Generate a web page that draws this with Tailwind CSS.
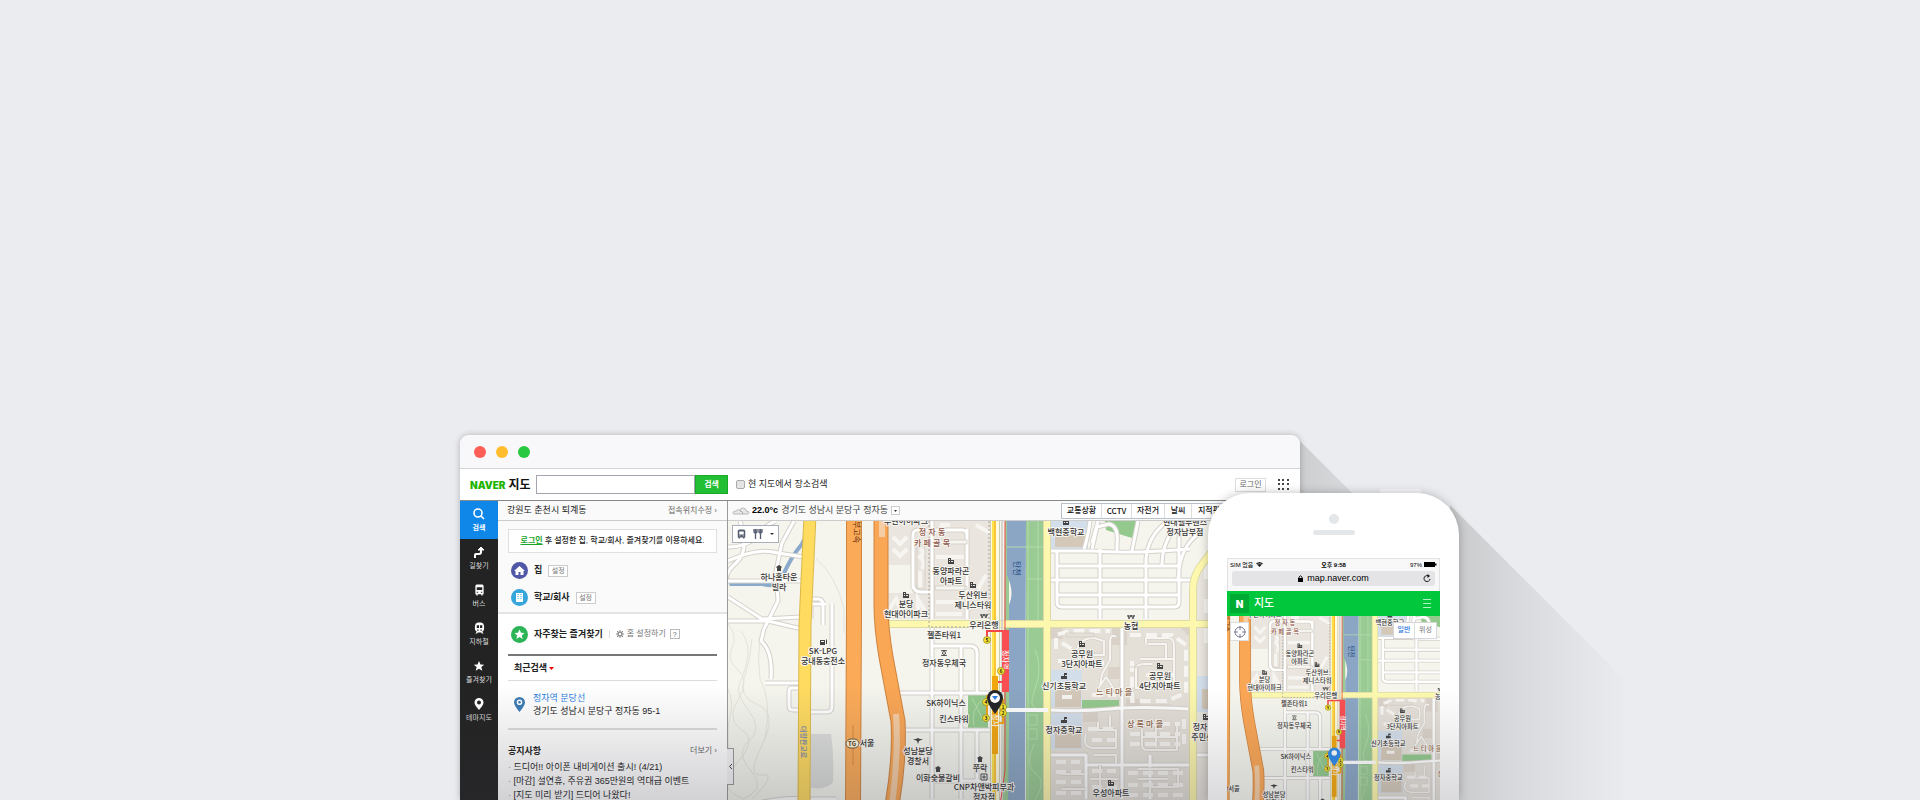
<!DOCTYPE html>
<html lang="ko">
<head>
<meta charset="utf-8">
<title>NAVER 지도</title>
<script src="https://cdn.jsdelivr.net/npm/@tailwindcss/browser@4"></script>
</head>
<body class="bg-[#ebecf0] font-['Liberation_Sans','Noto_Sans_CJK_KR',sans-serif] text-[#222]">

<!-- Shared map artwork -->
<svg width="0" height="0" class="absolute" aria-hidden="true">
  <defs>
    <g id="streets" fill="none" stroke-linejoin="round">
      <path d="M728 548q20 0 30-12t18-14M728 562q30-14 50-8l26 4M740 522q10 30-4 42t-8 24M794 522l-12 22-6 28 2 30-14 28-3 12q12 10 10 38M728 582h74M728 598l34 22 40-2M728 622l40 0 34 8M765 684h34M799 689h-8q-2 0-2 4v14q0 4 4 4h6M812 600h6q5 0 5 6v20M832 605v102q0 6-5 6h-16M811 600v20M812 605h14M760 804q20-6 50-4h26"/>
      <path d="M887 694h108M904 731h86M932 628v172M961 647v84M977 731v69M961 731v69M932 647h38q7 0 7 7v40M932 782h60M932 522v98M967 530q0 0 0 90M913 590v-54q0-5 5-5h44q5 0 5 5v58M913 585q0 8 8 8h11"/>
      <path d="M1050 552h42q40 3 98-2M1057 553v50q0 5 5 5h112q5 0 5-5v-76M1057 567h122M1046 581h146M1057 596h122M1100 550v70M1092 550l5-22 12-3q10 2 8 20v7M1098 522l-6 22M1132 552l6-30M1146 620v-60q2-24 22-38M1162 566q0-24 18-44M1178 580q2-34 22-46M1090 522q-2 16-6 28"/>
      <path d="M1122 628v172M1050 711q30 2 60-1t78 0M1050 756h36v10h104M1086 766v34M1000 711h48M1150 756v44M1190 756h30"/>
    </g>
    <g id="lanes" fill="none" stroke-linejoin="round">
      <path d="M1076 655q2-16 18-16l10 3v14h-18v8M1110 641v20l-8 14-2 12M1116 638q-6-4-6 6M1098 690l8-12 8 12M1146 645v-6h22q6 0 6 8v42h-38v-18q0-6 8-6h8M1140 660h34M1148 645h18v14"/>
      <path d="M1086 735q-4 14 8 14h22v-18h-18v-8M1110 731v-14M1142 728v18q0 5 5 5h30v-28M1156 720v28M1142 738h35M1094 756h22v8M1138 770h40v18h-28v10M1138 780h30M1090 780h28M1100 766v30M1062 775h22M1062 790h24"/>
    </g>
    <g id="map-art">
      <rect x="728" y="522" width="580" height="284" fill="#f5f5ee"/>
      <g fill="none" stroke="#e4e3d9" stroke-width="1">
        <path d="M728 625q10 12 4 24t6 22 0 30 4 30-6 34 8 35M741 632q10 14 6 30t-8 24 10 26 0 30 2 30-8 28M752 640q-2 22-8 40t14 26 4 40 0 30-10 24M728 690q6 14 2 28t0 40M816 560q20 16 28 50v24M760 640q-3 20 0 40 12 20 5 60"/>
      </g>
      <path d="M728 585h34q14 4 20-6 8-20 20-34l12-24" fill="none" stroke="#8aa9cb" stroke-width="4"/>
      <path d="M811 735h20q3 20 2 48-6 8-22 6z" fill="#dcdddb"/>
      <path d="M888 522h105v98H888z" fill="#eae6df"/>
      <path d="M889 566h24v28h-24z" fill="#f5f5ee"/>
      <path d="M968 695h20v34h-20z" fill="#93c98d"/>
      <path d="M972 699l12 24M984 699q-14 12-10 28" stroke="#b5dab0" fill="none"/>
      <path d="M1050 628h140v178h-140z" fill="#e4dfd7"/>
      <path d="M1196 580l16-30h96v256h-112z" fill="#e9e5de"/>
      <path d="M1050 522h38v28h-38zM1051 671h31v37h-31zM1051 714h31v36h-31zM1197 677h30v36h-30z" fill="#d3deeb"/>
      <path d="M1055 536h31v12h-31zM1055 688h26v20h-26zM1055 731h26v18h-26zM1202 690h16v20h-16z" fill="#d4c9b9"/>
      <path d="M1105 522h33l-6 17-26-8zM1082 701h37v9h-37z" fill="#93c98d"/>
      <g fill="#dad2c9"><path d="M1112 628h15v18h-15zM1083 712h15v11h-15zM1126 700h14v10h-14zM1108 668h13v12h-13zM1051 628h12v12h-12zM1180 628h10v10z"/></g>
      <use href="#streets" stroke="#d5d1ca" stroke-width="5"/>
      <use href="#streets" stroke="#fff" stroke-width="3"/>
      <use href="#lanes" stroke="#cdc8c0" stroke-width="3"/>
      <use href="#lanes" stroke="#f7f5f1" stroke-width="2"/>
      <g fill="none" stroke="#f7f5f1" stroke-width="4">
        <path d="M893 538l7 7 7-7M893 550l7 7 7-7" />
        <path d="M936 543h30M936 558h28M936 570h28M936 589h28M936 603h28M936 615h26"/>
        <path stroke-dasharray="11 5" d="M1056 650v-14l14-4h40M1058 662h14M1062 644l10 6M1086 664h18M1130 636h42l14 10v48l-20 8h-34v-40M1146 676h30M1146 684h24M1092 696h24M1062 698h10"/>
        <path stroke-dasharray="10 5" d="M1088 730h28M1092 741h24M1130 725h50M1130 735h50M1130 745h50M1056 763h24M1056 773h30M1056 783h30M1056 794h30M1092 772h24M1092 788h26M1128 774h56M1128 786h56M1128 796h56M1184 720v30"/>
        <path d="M920 550q6 3 0 8 6 4 2 12M920 572v16M888 612l8-12 6 14M918 612v-12l8 14M978 590l8-14M976 526l14 8M940 526h10"/>
        <path d="M1206 560v20M1206 600v14M1206 628v16"/>
      </g>
      <g fill="none" stroke="#d6d1c8" stroke-width="1"><path d="M917 546h8v44h-8zM935 541h32v4h-32zM935 568h32v4h-32zM935 587h32v4h-32zM1066 634h28v4h-28zM1130 668h8v20M1136 706h36"/></g>
      <path d="M1026 522h18v284h-18z" fill="#9acb94"/>
      <path d="M1005 522h4v284h-6z" fill="#9acb94"/>
      <path d="M1007 522h19l-1 284h-17l1-80 0-120q6-12-2-30z" fill="#8ba6c4"/>
      <path d="M1007 548h37M1028 522v284M1038 522v100M1028 580h14M1035 650q8 20 0 40t4 20M1028 716h9v10h-9zM1028 730h9v10h-9zM1034 745q-10 22 2 30t-4 30" fill="none" stroke="#b3dbad" stroke-width="1"/>
      <g fill="none">
        <path d="M888 625h420M1047 522v284M1193 806V590q0-14 10-26l20-26" stroke="#dddba6" stroke-width="8"/>
        <path d="M888 625h420M1047 522v284M1193 806V590q0-14 10-26l20-26" stroke="#fdf8ae" stroke-width="6"/>
        <path d="M1000 711h48" stroke="#fff" stroke-width="4"/>
        <path d="M929 522v106h58M989 522v106" stroke="#aaa49c" stroke-dasharray="2 2"/>
        <path d="M995 522v284" stroke="#cfcdb0" stroke-width="10"/>
        <path d="M995 522v284" stroke="#fffbe0" stroke-width="8"/>
        <path d="M994 522v284" stroke="#ffe24d" stroke-width="4"/>
        <path d="M995 522v284" stroke="#f6a821" stroke-width="1"/>
        <path d="M1002 522v284" stroke="#d8d5cd" stroke-width="2"/>
        <path d="M810 516l-5 110-1 180" stroke="#d9b94c" stroke-width="13"/>
        <path d="M810 516l-5 110-1 180" stroke="#ffdb60" stroke-width="11"/>
        <path d="M854 516v100l-1 190" stroke="#cf8540" stroke-width="16"/>
        <path d="M854 516v100l-1 190" stroke="#fbab58" stroke-width="14"/>
        <path d="M881 516v90q0 22 5 52l12 64q2 38-6 84" stroke="#cf8540" stroke-width="15"/>
        <path d="M881 516v90q0 22 5 52l12 64q2 38-6 84" stroke="#f9a655" stroke-width="13"/>
        <path d="M896 715q3 36-4 91M882 522v16" stroke="#f4cda4" stroke-width="6"/>
        <path d="M853 726v40" stroke="#d98a3e"/>
        <path d="M1005 522v250l-5 34" stroke="#f4474b" stroke-width="1"/>
        <path d="M987 640v-8h18M998 683h6" stroke="#f4474b" stroke-width="2"/>
        <path d="M987 696v20M1003 700v24h-8" stroke="#efa519" stroke-width="2"/>
      </g>
      <path d="M1002 631h7v62h-7z" fill="#fa4f52"/>
      <path d="M992 677h6v78h-6z" fill="#f3a70f"/>
      <rect x="846" y="740" width="13" height="9" rx="5" fill="#fff3d6" stroke="#6b5a3d"/>
    </g>
    <g id="i-building" fill="#444"><path d="M-3-3h3v2h3v4h-6zM-2-2v1h1v-1zM-2 0v1h1V0zM0 0v1h1V0zM1 0v1h1V0z" fill-rule="evenodd"/></g>
    <g id="i-school" fill="#444"><path d="M-3 0h3v-3h3v2H1v1h2v3h-6z"/></g>
    <g id="i-hut" fill="#444"><path d="M-3-1L0-3l3 2-1 1v3h-4V0z"/></g>
    <g id="i-bank" fill="none" stroke="#444"><path d="M-3-2l1 4 2-4 2 4 1-4M-4-1h8" stroke-width=".9"/></g>
    <g id="i-post" fill="none" stroke="#444" stroke-width=".9"><circle r="1.500"/><path d="M-3-2l1-.5h4l1 .5M-3 2l1 .5h4l1-.5"/></g>
    <g id="i-police" fill="#444"><path d="M-5-2h3l2-1 2 1h3L1 0 0 3-1 0z"/></g>
    <g id="i-gas" fill="#444"><path d="M-3-2h5v5h-5zM3-3l1 1v4H3zM-2-1v1h3v-1z" fill-rule="evenodd"/></g>
    <g id="i-clinic"><path d="M-3-3h6v6h-6z" fill="#fff" stroke="#444"/><path d="M-2 0h4M0-2v4" stroke="#444"/></g>
    <linearGradient id="fadeA" gradientUnits="userSpaceOnUse" x1="840" y1="0" x2="980" y2="0"><stop offset="0" stop-color="#cdced0"/><stop offset="1" stop-color="#cdced0" stop-opacity="0"/></linearGradient>
    <linearGradient id="fadeB" gradientUnits="userSpaceOnUse" x1="1000" y1="0" x2="1170" y2="0"><stop offset="0" stop-color="#cbccce"/><stop offset=".35" stop-color="#d9dadd"/><stop offset="1" stop-color="#ebecf0"/></linearGradient>
  </defs>
</svg>

<main class="relative h-screen min-h-[800px] overflow-hidden pt-[435px]">
  <div class="relative mx-auto w-[1000px]">

    <svg class="absolute left-0 top-0 overflow-visible" width="1000" height="365" viewBox="0 0 1000 365" aria-hidden="true">
      <path d="M837 3l363 362H837z" fill="url(#fadeA)"/>
      <path d="M990 70l295 295H990z" fill="url(#fadeB)"/>
    </svg>

    <!-- Desktop browser -->
    <section class="relative w-[840px] h-[365px] flex flex-col overflow-hidden rounded-t-[9px] bg-white shadow-[0_0_6px_rgba(0,0,0,0.25)]">
      <div class="flex h-[34px] shrink-0 items-center gap-[10px] border-b border-[#d3d4d6] bg-[#f8f8fa] px-[14px]">
        <span class="size-3 rounded-full bg-[#ff5f57]"></span><span class="size-3 rounded-full bg-[#ffbd2e]"></span><span class="size-3 rounded-full bg-[#28c940]"></span>
      </div>
      <header class="flex h-8 shrink-0 items-center border-b border-[#888] bg-white pl-[10px] pr-[11px]">
        <a href="#" class="flex w-[66px] items-center gap-[3px] whitespace-nowrap leading-none">
          <span class="font-['Inter','Open_Sans',sans-serif] text-[10px] font-black text-[#1eb400]">NAVER</span>
          <span class="text-[12px] font-bold text-[#111]">지도</span>
        </a>
        <form class="flex h-[19px]" onsubmit="return false">
          <input aria-label="장소 검색" class="w-[159px] border border-[#a5a5af] bg-white px-1 text-[9px]">
          <button class="w-[33px] border border-[#18a82a] bg-[#22be33] text-[8px] font-bold text-white">검색</button>
        </form>
        <label class="ml-2 flex items-center gap-[3px] text-[9px] leading-none"><input type="checkbox" class="size-[9px] appearance-none rounded-[2px] border border-[#aaa] bg-[#e4e4e4]">현 지도에서 장소검색</label>
        <button class="ml-auto h-[14px] w-[31px] border border-[#ddd] text-[8px] leading-none text-[#666]">로그인</button>
        <button aria-label="전체 서비스" class="ml-3"><svg width="11" height="11" viewBox="0 0 11 11" fill="#444"><path d="M0 0h2v2H0zM4 0h2v2H4zM9 0h2v2H9zM0 4h2v2H0zM4 4h2v2H4zM9 4h2v2H9zM0 9h2v2H0zM4 9h2v2H4zM9 9h2v2H9z"/></svg></button>
      </header>

      <div class="flex min-h-0 flex-1">
        <nav class="flex w-[38px] shrink-0 flex-col bg-[#232323] text-[7px] leading-[9px] text-[#ddd]">
          <a href="#" class="flex h-[38px] flex-col items-center justify-center gap-[3px] bg-[#0f87e8] font-bold text-white"><svg width="12" height="12" viewBox="0 0 12 12" fill="none" stroke="#fff" stroke-width="1.6"><circle cx="5" cy="5" r="4"/><path d="M8 8l3 3"/></svg>검색</a>
          <a href="#" class="flex h-[38px] flex-col items-center justify-center gap-[3px]"><svg width="12" height="12" viewBox="0 0 12 12" fill="none" stroke="#fff" stroke-width="2"><path d="M2 12V9q0-1 1-1h3q2 0 2-2V3"/><path d="M5 4l3-3 3 3z" fill="#fff" stroke-width="1"/></svg>길찾기</a>
          <a href="#" class="flex h-[38px] flex-col items-center justify-center gap-[3px]"><svg width="11" height="12" viewBox="0 0 12 12"><path fill="#fff" fill-rule="evenodd" d="M3 0h6q1.500 0 1.500 2v8.500H9.500V12H8v-1.500H4V12H2.500v-1.500h-1V2Q1.500 0 3 0zM3 3v3h6V3zM3 8v1h1.500V8zM7.500 8v1H9V8z"/></svg>버스</a>
          <a href="#" class="flex h-[38px] flex-col items-center justify-center gap-[3px]"><svg width="11" height="12" viewBox="0 0 12 12"><path fill="#fff" fill-rule="evenodd" d="M4 0h4q3 1 3 4v3q0 2-2 3l1.500 2H8.500L8 11H4l-.5 1h-2L3 10Q1 9 1 7V4q0-3 3-4zM3 3v3h2.500V3zM6.500 3v3H9V3zM3.500 7.500V9H5V7.500zM7 7.500V9h1.500V7.500z"/></svg>지하철</a>
          <a href="#" class="flex h-[38px] flex-col items-center justify-center gap-[3px]"><svg width="12" height="12" viewBox="0 0 12 12"><path fill="#fff" d="M6 1l1.500 3.500 3.700.2-2.900 2.400 1 3.700L6 8.800l-3.300 2 1-3.700L.8 4.700l3.700-.2z"/></svg>즐겨찾기</a>
          <a href="#" class="flex h-[38px] flex-col items-center justify-center gap-[3px]"><svg width="12" height="12" viewBox="0 0 12 12"><path fill="#fff" fill-rule="evenodd" d="M6 0a4.500 4.500 0 0 1 4.500 4.500Q10.500 7 6 12 1.500 7 1.500 4.500A4.500 4.500 0 0 1 6 0zm0 2.500a2 2 0 1 0 0 4 2 2 0 0 0 0-4z"/></svg>테마지도</a>
        </nav>

        <div class="w-[230px] shrink-0 border-r border-[#999] bg-[#fafafa]">
          <div class="flex h-5 items-center justify-between border-b border-[#ccc] pl-[9px] pr-[10px] text-[9px] leading-none"><span>강원도 춘천시 퇴계동</span><a href="#" class="text-[8px] text-[#666]">접속위치수정 ›</a></div>
          <div class="h-[93px] border-b-2 border-[#e4e4e4] px-[10px] pt-2">
            <p class="flex h-6 items-center justify-center gap-[2px] whitespace-nowrap border border-[#e0e0e0] bg-white text-[8px] font-medium leading-none"><a href="#" class="font-bold text-[#1ba62b] underline">로그인</a> 후 설정한 집, 학교/회사, 즐겨찾기를 이용하세요.</p>
            <div class="mt-[9px] flex flex-col gap-[10px] pl-[3px] text-[9px] font-bold leading-none">
              <div class="flex h-[17px] items-center gap-[6px]"><svg width="17" height="17" viewBox="0 0 17 17"><circle cx="8.500" cy="8.500" r="8.500" fill="#4f57a6"/><path d="M3 9l5.500-5L14 9h-1.500v4h-3v-3h-2v3h-3V9z" fill="#fff"/></svg>집<button class="h-3 w-5 border border-[#ccc] bg-white text-[7px] font-normal leading-none text-[#777]">설정</button></div>
              <div class="flex h-[17px] items-center gap-[6px]"><svg width="17" height="17" viewBox="0 0 17 17"><circle cx="8.500" cy="8.500" r="8.500" fill="#36a5dc"/><path d="M5 4h7v9H5z" fill="#fff"/><path d="M7 5v6M10 5v6" stroke="#36a5dc" stroke-dasharray="1 1"/></svg>학교/회사<button class="h-3 w-5 border border-[#ccc] bg-white text-[7px] font-normal leading-none text-[#777]">설정</button></div>
            </div>
          </div>
          <div class="bg-white px-[10px]">
            <div class="flex h-[42px] items-center gap-[6px] whitespace-nowrap border-b-2 border-[#777] pl-[3px] text-[9px] font-bold leading-none"><svg width="17" height="17" viewBox="0 0 17 17"><circle cx="8.500" cy="8.500" r="8.500" fill="#2db457"/><path fill="#fff" d="M8.500 3.500l1.500 3.300 3.500.3-2.700 2.400.9 3.500-3.200-1.900L5.300 13l.9-3.500-2.700-2.400 3.500-.3z"/></svg>자주찾는 즐겨찾기
              <button class="flex items-center gap-[3px] border-l border-[#ddd] pl-[6px] text-[8px] font-normal leading-none text-[#777]"><svg width="8" height="8" viewBox="0 0 8 8" fill="none" stroke="#888"><circle cx="4" cy="4" r="2" stroke-width="1.500"/><path d="M4 0v1M4 7v1M0 4h1M7 4h1M1 1l1 1M6 6l1 1M7 1L6 2M2 6L1 7"/></svg>홈 설정하기</button>
              <button class="-ml-[2px] size-[10px] border border-[#bbb] text-[7px] font-normal leading-none text-[#666]">?</button></div>
            <h2 class="flex h-[25px] items-center gap-[2px] border-b border-[#ddd] pl-[6px] text-[9px] font-bold leading-none">최근검색<svg width="5" height="3" viewBox="0 0 5 3"><path d="M0 0h5L2.500 3z" fill="#e00"/></svg></h2>
            <div class="flex h-[49px] items-center gap-2 border-b-2 border-[#ddd] pl-[6px] text-[9px] leading-[13px]"><svg width="11" height="15" viewBox="0 0 11 15"><path fill="#3d7cb5" fill-rule="evenodd" d="M5.500 0A5.500 5.500 0 0 1 11 5.500Q11 8.500 5.500 15 0 8.500 0 5.500A5.500 5.500 0 0 1 5.500 0zm0 2.500a2.800 2.800 0 1 0 0 5.600 2.800 2.800 0 0 0 0-5.600z"/><circle cx="5.500" cy="5.300" r="1.300" fill="#3d7cb5"/></svg><div><a href="#" class="block text-[#1f80dd]">정자역 분당선</a><p>경기도 성남시 분당구 정자동 95-1</p></div></div>
            <div class="flex items-center justify-between pt-[15px] pb-[3px] leading-[12px]"><h2 class="text-[9px] font-bold">공지사항</h2><a href="#" class="text-[8px] text-[#666]">더보기 ›</a></div>
            <ul class="whitespace-nowrap text-[9px] leading-[14px]">
              <li><span class="text-[#999]">·</span> <a href="#">드디어!! 아이폰 내비게이션 출시! (4/21)</a></li>
              <li><span class="text-[#999]">·</span> <a href="#">[마감] 설연휴, 주유권 365만원의 역대급 이벤트</a></li>
              <li><span class="text-[#999]">·</span> <a href="#">[지도 미리 받기] 드디어 나왔다!</a></li>
            </ul>
          </div>
        </div>

        <div class="flex min-w-0 flex-1 flex-col">
          <div class="flex h-5 shrink-0 items-center border-b border-[#ccc] bg-[#fafafa] pl-1 text-[9px] leading-none whitespace-nowrap">
            <svg width="18" height="9" viewBox="0 0 18 9" fill="#e8e8e8" stroke="#aaa" stroke-width=".8"><path d="M1 7q0-2 3-2 2-3 5 0 2 0 2 3H2q-1 0-1-1z"/><path d="M8 5q0-3 3-3t3 3q3 0 3 1.500T15 8h-4q0-3-3-3z"/></svg>
            <strong class="ml-[2px] font-bold text-black">22.0°c</strong><span class="ml-[3px] text-[#444]">경기도 성남시 분당구 정자동</span>
            <button aria-label="지역 선택" class="ml-[3px] flex size-[9px] items-center justify-center border border-[#ccc] bg-white"><svg width="3" height="2" viewBox="0 0 3 2"><path d="M0 0h3L1.500 2z" fill="#333"/></svg></button>
            <div class="ml-auto mr-[47px] flex h-4 divide-x divide-[#ddd] border border-[#b9c0cb] bg-white text-[8px] font-medium text-[#111]">
              <button class="w-10">교통상황</button><button class="w-[30px] font-['Noto_Sans_CJK_KR',sans-serif]">CCTV</button><button class="w-[33px]">자전거</button><button class="w-[27px]">날씨</button><button class="w-[60px] pl-[6px] text-left">지적편집도</button>
            </div>
          </div>
          <div class="relative min-h-0 flex-1">
            <svg class="block h-full w-full" viewBox="728 522 572 279" preserveAspectRatio="xMinYMin slice" role="img" aria-label="정자역 주변 지도">
              <use href="#map-art"/><g data-labels></g>
              <path d="M995 715q-8-11-8-16a8 8 0 0 1 16 0q0 5-8 16z" fill="#232427"/><circle cx="995" cy="699" r="5" fill="#fff"/><path d="M992 697h6l-3 4z" fill="#2b7de0"/>
            </svg>
            <div class="absolute left-1 top-1 flex h-[18px] w-[47px] items-center justify-around border border-[#a9afba] bg-white">
              <button aria-label="버스"><svg width="9" height="10" viewBox="0 0 12 12"><path fill="#555e70" fill-rule="evenodd" d="M3 0h6q2 0 2 2v8.500H10V12H8v-1.500H4V12H2v-1.500H1V2q0-2 2-2zM3 2.500v4h6v-4zM3 8v1h1.500V8zM7.500 8v1H9V8z"/></svg></button>
              <button aria-label="음식점"><svg width="10" height="10" viewBox="0 0 10 10" stroke="#555e70" fill="none"><path d="M2.500 4v6M1 0v3q1.500 2 3 0V0M2.500 0v4" stroke-width="1.300"/><path d="M7.500 4v6M6 0v3q1.500 2 3 0V0M7.500 0v4" stroke-width="1.300"/></svg></button>
              <button aria-label="더보기"><svg width="4" height="2" viewBox="0 0 4 2"><path d="M0 0h4L2 2z" fill="#333"/></svg></button>
            </div>
            <button aria-label="패널 접기" class="absolute -left-px top-[227px] flex h-[37px] w-[7px] items-center justify-center border border-l-0 border-[#999] bg-[#f5f5f7]"><svg width="3" height="5" viewBox="0 0 3 5" fill="none" stroke="#444"><path d="M3 0L.5 2.500 3 5"/></svg></button>
          </div>
        </div>
      </div>
      <div class="pointer-events-none absolute inset-x-0 bottom-0 h-[115px] bg-linear-to-b from-[#33333f]/0 to-[#33333f]/22"></div>
    </section>

    <!-- Phone -->
    <section class="absolute left-[748px] top-[58px] w-[251px]">
      <div class="absolute -top-1 left-[172px] h-2 w-[41px] rounded-t-[2px] bg-[#f8f8fa]"></div>
      <div class="relative flex h-[307px] flex-col rounded-t-[42px] bg-white px-[19px] shadow-[0_0_10px_rgba(0,0,0,0.25)]">
        <div class="flex h-[65px] shrink-0 flex-col items-center gap-[6px] pt-[21px]"><span class="size-[10px] rounded-full bg-[#e4e7e9]"></span><span class="h-[5px] w-[42px] rounded-full bg-[#e4e7e9]"></span></div>
        <div class="flex h-[33px] shrink-0 flex-col border border-b-0 border-[#e2e2e4] bg-[#f8f8f9] px-1">
          <div class="-mx-[2px] grid h-[11px] grid-cols-3 items-center text-[6px] leading-none text-black">
            <span class="flex items-center gap-[3px]"><span>SIM 없음</span><svg width="7" height="5" viewBox="0 0 7 5"><path d="M3.500 5L0 1.500Q3.500-1.500 7 1.500z" fill="#222"/><path d="M1 2.500q2.500-2 5 0" stroke="#f8f8f9" stroke-width=".5" fill="none"/></svg></span>
            <span class="text-center font-bold">오후 9:58</span>
            <span class="flex items-center justify-end gap-[2px]">97%<svg width="13" height="5" viewBox="0 0 13 5"><path d="M0 0h11v1.500h1.500v2H11V5H0z"/></svg></span>
          </div>
          <div class="mt-px flex h-[15px] items-center rounded-[3px] bg-[#e4e4e6] px-1 text-black">
            <span class="flex flex-1 items-center justify-center gap-1 pl-2 text-[9px] leading-none"><svg width="5" height="7" viewBox="0 0 5 7"><path d="M0 3h5v4H0z"/><path d="M1 3V2q1.500-2.500 3 0v1" fill="none" stroke="#000" stroke-width=".9"/></svg>map.naver.com</span>
            <button aria-label="새로고침"><svg width="8" height="9" viewBox="0 0 8 9" fill="none" stroke="#111"><path d="M6 2.300A3 3 0 1 0 7 5"/><path d="M4.500 0L7 2 4.500 4z" fill="#111" stroke="none"/></svg></button>
          </div>
        </div>
        <div class="flex h-[25px] shrink-0 items-center bg-[#00c73c] pl-[3px] pr-[9px] text-white">
          <span class="flex size-[19px] items-center justify-center bg-[#00ab33] font-['Inter','Open_Sans',sans-serif] text-[10px] font-black leading-none">N</span>
          <span class="ml-[5px] text-[11px] font-medium leading-none">지도</span>
          <button aria-label="메뉴" class="ml-auto"><svg width="8" height="9" viewBox="0 0 8 9" stroke="#b4efc5"><path d="M0 .5h8M0 4.500h8M0 8.500h8"/></svg></button>
        </div>
        <div class="relative min-h-0 flex-1 overflow-hidden">
          <svg class="block h-full w-full" viewBox="858 524 273 235" preserveAspectRatio="xMinYMin slice" role="img" aria-label="모바일 지도">
            <use href="#map-art"/><g data-labels></g>
            <path d="M995 716q-8-11-8-16a8 8 0 0 1 16 0q0 5-8 16z" fill="#2f8be8"/><circle cx="995" cy="699" r="3.500" fill="#fff"/>
          </svg>
          <button aria-label="현재 위치" class="absolute left-[3px] top-[6px] flex size-[19px] items-center justify-center border border-[#ddd] bg-white"><svg width="12" height="12" viewBox="0 0 12 12" fill="none" stroke="#777f90"><circle cx="6" cy="6" r="5"/><path d="M6 0v4M6 8v4M0 6h4M8 6h4"/></svg></button>
          <div class="absolute right-[3px] top-[6px] flex h-[17px] divide-x divide-[#ddd] border border-[#d5d5da] bg-white text-[7px]"><button class="w-[21px] font-medium text-[#2673dd]">일반</button><button class="w-[21px] text-[#777]">위성</button></div>
        </div>
        <div class="pointer-events-none absolute inset-x-0 bottom-0 h-[110px] bg-linear-to-b from-[#33333f]/0 to-[#33333f]/18"></div>
      </div>
    </section>
  </div>
</main>

<script>
const NS = 'http://www.w3.org/2000/svg';
// Each place: centre x, baseline y, lines of text, icon, icon y, colour, line gap
const places = [
  [779, 581, ['하나홈타운', '빌라'], 'i-hut', 569],
  [823, 655, ['SK-LPG', '궁내동충전소'], 'i-gas', 643],
  [906, 525, ['우현아이파크'], null],
  [932, 536, ['정 자 동', '카 페 골 목'], null, 0, '#8d5448', 11],
  [951, 575, ['동양파라곤', '아파트'], 'i-building', 562],
  [906, 608, ['분당', '현대아이파크'], 'i-building', 596],
  [973, 599, ['두산위브', '제니스타워'], 'i-building', 586],
  [984, 629, ['우리은행'], 'i-bank', 617],
  [944, 639, ['젤존타워1'], null],
  [944, 667, ['정자동우체국'], 'i-post', 654],
  [946, 707, ['SK하이닉스'], null],
  [954, 723, ['킨스타워'], null],
  [918, 755, ['성남분당', '경찰서'], 'i-police', 742],
  [938, 782, ['이화숯불갈비'], 'i-hut', 770],
  [980, 772, ['쭈락'], 'i-hut', 760],
  [984, 791, ['CNP차앤박피부과', '정자점'], 'i-clinic', 778],
  [867, 747, ['서울'], null],
  [1066, 536, ['백현중학교'], 'i-building', 523],
  [1185, 526, ['현대벨루벤스', '정자남부점'], null],
  [1131, 630, ['농협'], 'i-bank', 618],
  [1082, 658, ['공무원', '3단지아파트'], 'i-building', 645],
  [1160, 680, ['공무원', '4단지아파트'], 'i-building', 667],
  [1064, 690, ['신기초등학교'], 'i-school', 677],
  [1114, 696, ['느 티 마 을'], null, 0, '#8f6547'],
  [1064, 734, ['정자중학교'], 'i-school', 721],
  [1145, 728, ['상 록 마 을'], null, 0, '#8f6547'],
  [1111, 797, ['우성아파트'], 'i-building', 784],
  [1206, 731, ['정자2동', '주민센터'], 'i-building', 718]
];
// Names written along roads and rails
const along = [
  [854, 522, '부고속', '#7d4a1c', 8], [801, 727, '대왕판교로', '#6f82b0', 7],
  [1014, 562, '탄천', '#34598f', 8], [1003, 651, '정자역', '#fff', 7], [993, 715, '정자', '#fff', 7]
];
const exits = [[987,641,5],[1001,672,6],[986,703,4],[1003,708,1],[1003,714,2],[986,719,3]];
function el(name, attrs, parent, text) {
  const n = document.createElementNS(NS, name);
  for (const k in attrs) n.setAttribute(k, attrs[k]);
  if (text !== undefined) n.textContent = text;
  parent.appendChild(n);
  return n;
}
document.querySelectorAll('[data-labels]').forEach(g => {
  g.setAttribute('text-anchor', 'middle');
  g.setAttribute('font-family', '"Noto Sans CJK KR", sans-serif');
  g.setAttribute('font-size', 8);
  g.setAttribute('font-weight', 500);
  for (const [x, y, lines, icon, iy, color, gap] of places) {
    if (icon) el('use', { href: '#' + icon, x: x, y: iy }, g);
    lines.forEach((t, i) => el('text', { x, y: y + i * (gap || 10), fill: color || '#333', stroke: '#f7f6f1', 'stroke-width': 2, 'stroke-linejoin': 'round', 'paint-order': 'stroke' }, g, t));
  }
  for (const [x, y, t, fill, size] of along)
    el('text', { transform: `translate(${x} ${y}) rotate(90)`, fill, 'font-size': size, 'text-anchor': 'start' }, g, t);
  for (const [x, y, n] of exits) {
    el('circle', { cx: x, cy: y, r: 3.5, fill: '#ffe930', stroke: '#8d8420', 'stroke-width': .7 }, g);
    el('text', { x, y: y + 2, 'font-size': 5, fill: '#222', 'font-weight': 700 }, g, n);
  }
  el('text', { x: 852, y: 747, 'font-size': 6, fill: '#4a3a20', 'font-weight': 700 }, g, 'TG');
});
</script>
</body>
</html>
